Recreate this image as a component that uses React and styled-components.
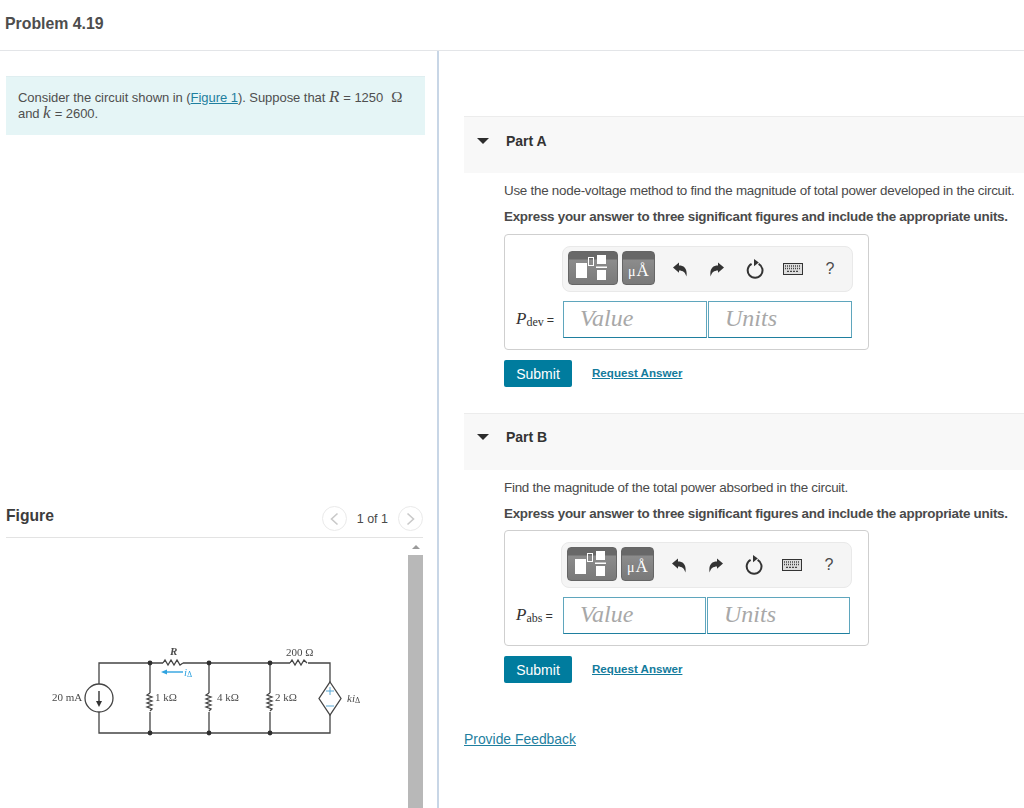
import React from 'react'
import styled, { createGlobalStyle } from 'styled-components'

const GlobalStyle = createGlobalStyle`
  html, body {
    margin: 0;
    padding: 0;
    background: #ffffff;
    font-family: "Liberation Sans", Arial, sans-serif;
    color: #4a4a4a;
  }
`

const Page = styled.div`
  width: 1024px;
  height: 808px;
  overflow: hidden;
  display: flex;
  flex-direction: column;
`

const Header = styled.header`
  height: 51px;
  flex-shrink: 0;
  box-sizing: border-box;
  padding: 15px 0 0 5px;
  border-bottom: 1px solid #e3e5e8;
`

const Title = styled.h1`
  margin: 0;
  font-size: 15.85px;
  line-height: 18px;
  font-weight: 700;
  color: #4d4d4d;
`

const Columns = styled.div`
  flex: 1;
  display: flex;
  min-height: 0;
`

const LeftColumn = styled.section`
  width: 439px;
  flex-shrink: 0;
  box-sizing: border-box;
  padding: 25px 12px 0 6px;
  border-right: 2px solid #c8d6e6;
  display: flex;
  flex-direction: column;
`

const RightColumn = styled.main`
  flex: 1;
  min-width: 0;
  padding: 65px 0 0 25px;
`

const Prompt = styled.div`
  height: 59px;
  box-sizing: border-box;
  padding: 13px 12px 0 12px;
  background: #e5f5f6;
  border-top: 1px solid #dfeef0;
  font-size: 13px;
  line-height: 16px;
  letter-spacing: -0.05px;
  color: #4f4f4f;
`

const MathVar = styled.i`
  font-family: "Liberation Serif", serif;
  font-size: 17px;
  line-height: 0;
  letter-spacing: 0.5px;
`

const OhmSign = styled.span`
  font-family: "Liberation Serif", serif;
  font-size: 15px;
  line-height: 0;
  margin-left: 8px;
`

const InlineLink = styled.a`
  color: #1f7f9f;
  text-decoration: underline;
`

const FigureBar = styled.div`
  margin: 371px 2px 0 0;
  height: 32px;
  box-sizing: border-box;
  border-bottom: 1px solid #e3e3e3;
  display: flex;
  align-items: flex-start;
`

const FigureTitle = styled.h2`
  margin: 1px 0 0;
  flex: 1;
  font-size: 15.7px;
  line-height: 18px;
  font-weight: 700;
  color: #3c3c3c;
`

const Pager = styled.div`
  display: flex;
  align-items: center;
  gap: 10px;
  font-size: 12.5px;
  color: #4a4a4a;
`

const PagerButton = styled.span`
  width: 25px;
  height: 25px;
  box-sizing: border-box;
  border: 1px solid #eaeaea;
  border-radius: 50%;
  display: flex;
  align-items: center;
  justify-content: center;
`

const FigureViewport = styled.div`
  flex: 1;
  min-height: 0;
  margin-right: 2px;
  display: flex;
  overflow: hidden;
`

const CircuitArea = styled.div`
  flex: 1;
  min-width: 0;
`

const CircuitSvg = styled.svg`
  display: block;
  filter: blur(0.35px);
`

const ScrollTrack = styled.div`
  width: 15px;
  flex-shrink: 0;
  display: flex;
  flex-direction: column;
  align-items: center;
`

const ScrollUp = styled.span`
  height: 17px;
  width: 100%;
  display: flex;
  align-items: center;
  justify-content: center;
  &::before {
    content: '';
    border-left: 4px solid transparent;
    border-right: 4px solid transparent;
    border-bottom: 4px solid #9a9a9a;
  }
`

const ScrollThumb = styled.div`
  flex: 1;
  width: 15px;
  background: #b8b8b8;
`

const PartHeader = styled.div`
  height: 57px;
  box-sizing: border-box;
  background: #f8f8f8;
  border-top: 1px solid #ececec;
  display: flex;
  align-items: flex-start;
  padding: ${(p) => p.$top}px 0 0 13px;
`

const Caret = styled.span`
  width: 0;
  height: 0;
  margin-top: 5px;
  border-left: 6px solid transparent;
  border-right: 6px solid transparent;
  border-top: 6px solid #2d2d2d;
`

const PartTitle = styled.h3`
  margin: 0 0 0 17px;
  font-size: 14px;
  line-height: 16px;
  font-weight: 700;
  color: #333333;
`

const PartBody = styled.div`
  padding: 10px 0 26px 40px;
`

const Instruction = styled.p`
  margin: 0 0 ${(p) => p.$gap}px;
  font-size: 13.4px;
  line-height: 16px;
  font-weight: ${(p) => (p.$strong ? 700 : 400)};
  letter-spacing: ${(p) => (p.$strong ? '-0.26px' : '-0.25px')};
  color: #4a4a4a;
  white-space: nowrap;
`

const AnswerBox = styled.div`
  width: 365px;
  height: 116px;
  box-sizing: border-box;
  border: 1px solid #cfcfcf;
  border-radius: 4px;
  padding: 11px 0 0 57px;
`

const Toolbar = styled.div`
  width: 291px;
  height: 46px;
  box-sizing: border-box;
  margin-left: ${(p) => p.$shift}px;
  background: #f5f5f5;
  border: 1px solid #e9e9e9;
  border-radius: 8px;
  display: flex;
  align-items: center;
  padding: 0 0 2px 5px;
`

const TemplateButton = styled.span`
  width: ${(p) => p.$width}px;
  height: 34px;
  margin-right: 4px;
  box-sizing: border-box;
  border-radius: 4px;
  border: 1px solid #666666;
  background: linear-gradient(#686868 0, #686868 7px, #8c8c8c 8px, #797979 100%);
  display: flex;
  align-items: flex-end;
  justify-content: center;
`

const MuLabel = styled.span`
  font-family: "Liberation Serif", serif;
  font-size: 17px;
  line-height: 25px;
  color: #ffffff;
`

const MuSmall = styled.span`
  font-size: 14px;
  margin-right: 1px;
`

const ToolIcon = styled.span`
  width: ${(p) => p.$width}px;
  padding-top: 2px;
  display: flex;
  justify-content: center;
  color: #333333;
`

const HelpMark = styled.span`
  font-size: 16px;
  line-height: 18px;
  color: #4a4a4a;
`

const InputRow = styled.div`
  display: flex;
  align-items: center;
  margin-top: 9px;
  margin-left: -46px;
`

const VarLabel = styled.span`
  width: 47px;
  flex-shrink: 0;
  font-size: 12.5px;
  color: #333333;
  white-space: nowrap;
`

const VarName = styled.i`
  font-family: "Liberation Serif", serif;
  font-size: 17px;
`

const VarSub = styled.span`
  font-family: "Liberation Serif", serif;
  font-size: 12px;
  margin-right: 3px;
  vertical-align: -2px;
`

const AnswerInput = styled.input`
  width: ${(p) => p.$width}px;
  height: 37px;
  box-sizing: border-box;
  margin-right: 1px;
  padding: 0 0 2px 16px;
  border: 1px solid #5fa6bd;
  border-bottom-color: #1f7f9f;
  border-radius: 0;
  outline: none;
  background: #ffffff;
  font-family: "Liberation Serif", serif;
  font-style: italic;
  font-size: 24px;
  &::placeholder {
    color: #a8a8a8;
    opacity: 1;
  }
`

const ActionRow = styled.div`
  margin-top: 10px;
  display: flex;
  align-items: center;
  gap: 20px;
`

const SubmitButton = styled.button`
  width: 68px;
  height: 27px;
  border: none;
  border-radius: 2px;
  background: #007c9e;
  color: #ffffff;
  font-family: "Liberation Sans", Arial, sans-serif;
  font-size: 14px;
  padding: 0;
`

const RequestLink = styled.a`
  margin-bottom: 2px;
  font-size: 11.6px;
  font-weight: 700;
  color: #137b9c;
  text-decoration: underline;
`

const FeedbackLink = styled.a`
  display: block;
  margin-top: 22px;
  font-size: 13.9px;
  line-height: 16px;
  color: #1f7f9f;
  text-decoration: underline;
`

const ChevronIcon = ({ flip }) => (
  <svg width="9" height="14" viewBox="0 0 9 14">
    <path
      d={flip ? 'M1.5 1.5 L7.5 7 L1.5 12.5' : 'M7.5 1.5 L1.5 7 L7.5 12.5'}
      fill="none"
      stroke="#c9c9c9"
      strokeWidth="1.6"
    />
  </svg>
)

const TemplatesIcon = () => (
  <svg width="48" height="32" viewBox="0 0 48 32">
    <rect x="7" y="11" width="11" height="15" fill="#ffffff" />
    <rect x="19.5" y="5.5" width="5" height="8" fill="none" stroke="#ffffff" strokeWidth="1" />
    <rect x="28" y="3" width="9" height="9" fill="#ffffff" />
    <rect x="27" y="14.5" width="11" height="1.5" fill="#ffffff" />
    <rect x="28" y="18" width="9" height="10" fill="#ffffff" />
  </svg>
)

const ReplyIcon = ({ flip }) => (
  <svg width="14" height="15" viewBox="0 0 14 15" style={flip ? { transform: 'scaleX(-1)' } : undefined}>
    <path d="M0 5.5 L6 0.5 V3.4 C11.5 3.4 14.6 7 13.4 14.5 C12.4 10.4 10 8.4 6 8.4 V10.8 Z" fill="#333333" />
  </svg>
)

const ResetIcon = () => (
  <svg width="18" height="20" viewBox="0 0 18 20">
    <path d="M5.6 4.8 A7.4 7.4 0 1 0 12.6 4.8" fill="none" stroke="#333333" strokeWidth="2" />
    <path d="M8 0 L12.8 3.6 L8 7.2 Z" fill="#333333" />
  </svg>
)

const KeyboardIcon = () => (
  <svg width="20" height="12" viewBox="0 0 20 12">
    <rect x="0.5" y="0.5" width="19" height="11" fill="#dddddd" stroke="#333333" />
    <path
      d="M2 3 H18 M2 5.5 H18"
      stroke="#444444"
      strokeWidth="1.3"
      strokeDasharray="1 1"
    />
    <path d="M4 8.4 H16" stroke="#444444" strokeWidth="1.3" strokeDasharray="2 1" />
  </svg>
)

const wire = { fill: 'none', stroke: '#444444', strokeWidth: 1.3 }
const label = { fontFamily: '"Liberation Serif", serif', fontSize: 11, fill: '#4a4a4a' }
const nodes = [
  [150, 663], [209, 663], [270, 663],
  [150, 733], [209, 733], [270, 733],
]
const coil = 'l-3 2 l5 2 l-5 2 l5 2 l-5 2 l5 2 l-5 2 l5 2 l-2 2'

const Circuit = () => (
  <CircuitSvg width="400" height="270" viewBox="6 538 400 270">
    <path
      {...wire}
      d="M99 684 V663 H163 M183 663 H290 M308 663 H330 V682 M330 715 V733 H99 V712 M150 663 V693 M150 712 V733 M209 663 V693 M209 712 V733 M270 663 V693 M270 712 V733"
    />
    <path {...wire} d="M163 663 l2 -3 l3 5 l3 -5 l3 5 l3 -5 l3 5 l3 -2" />
    <path {...wire} d="M290 663 l2 -3 l3 5 l3 -5 l3 5 l3 -5 l3 3" />
    <path {...wire} d={`M150 693 ${coil}`} />
    <path {...wire} d={`M209 693 ${coil}`} />
    <path {...wire} d={`M270 693 ${coil}`} />
    {nodes.map(([cx, cy]) => (
      <circle key={`${cx}-${cy}`} cx={cx} cy={cy} r="2.4" fill="#2f2f2f" />
    ))}
    <circle cx="99" cy="698" r="14" fill="#ffffff" stroke="#444444" strokeWidth="1.3" />
    <path d="M99 691 V704" stroke="#333333" strokeWidth="1.4" />
    <path d="M96 701 L99 707 L102 701 Z" fill="#333333" />
    <path d="M330 682 L341 698.5 L330 715 L319 698.5 Z" fill="#ffffff" stroke="#444444" strokeWidth="1.3" />
    <path d="M326 691 H334 M330 687 V695" stroke="#5aa9d6" strokeWidth="1" />
    <path d="M326 706 H334" stroke="#5aa9d6" strokeWidth="1" />
    <path d="M165 672 H183" stroke="#2fa3e0" strokeWidth="1.4" />
    <path d="M161 672 L167 669.5 V674.5 Z" fill="#2fa3e0" />
    <text x="184" y="676" fontFamily='"Liberation Serif", serif' fontSize="11" fontStyle="italic" fill="#2fa3e0">
      i<tspan fontStyle="normal" fontSize="8" dy="1">Δ</tspan>
    </text>
    <text {...label} x="170" y="655" fontStyle="italic" fontWeight="700">R</text>
    <text {...label} x="286" y="656">200 Ω</text>
    <text {...label} x="52" y="701">20 mA</text>
    <text {...label} x="155" y="701">1 kΩ</text>
    <text {...label} x="217" y="701">4 kΩ</text>
    <text {...label} x="275" y="701">2 kΩ</text>
    <text {...label} x="347" y="702" fontStyle="italic">
      ki<tspan fontStyle="normal" fontSize="8" dy="1">Δ</tspan>
    </text>
  </CircuitSvg>
)

const Part = ({ name, top, question, symbol, sub, gap, shift, fieldWidth }) => (
  <section>
    <PartHeader $top={top}>
      <Caret />
      <PartTitle>{name}</PartTitle>
    </PartHeader>
    <PartBody>
      <Instruction $gap={10}>{question}</Instruction>
      <Instruction $strong $gap={gap}>
        Express your answer to three significant figures and include the appropriate units.
      </Instruction>
      <AnswerBox>
        <Toolbar $shift={shift}>
          <TemplateButton $width={50}>
            <TemplatesIcon />
          </TemplateButton>
          <TemplateButton $width={33}>
            <MuLabel><MuSmall>μ</MuSmall>Å</MuLabel>
          </TemplateButton>
          <ToolIcon $width={41}>
            <ReplyIcon />
          </ToolIcon>
          <ToolIcon $width={33}>
            <ReplyIcon flip />
          </ToolIcon>
          <ToolIcon $width={44}>
            <ResetIcon />
          </ToolIcon>
          <ToolIcon $width={31}>
            <KeyboardIcon />
          </ToolIcon>
          <ToolIcon $width={44}>
            <HelpMark>?</HelpMark>
          </ToolIcon>
        </Toolbar>
        <InputRow>
          <VarLabel>
            <VarName>P</VarName>
            <VarSub>{sub}</VarSub>=
          </VarLabel>
          <AnswerInput $width={fieldWidth} placeholder="Value" aria-label={`${symbol} value`} />
          <AnswerInput $width={fieldWidth} placeholder="Units" aria-label={`${symbol} units`} />
        </InputRow>
      </AnswerBox>
      <ActionRow>
        <SubmitButton type="button">Submit</SubmitButton>
        <RequestLink href="#">Request Answer</RequestLink>
      </ActionRow>
    </PartBody>
  </section>
)

const App = () => (
  <Page>
    <GlobalStyle />
    <Header>
      <Title>Problem 4.19</Title>
    </Header>
    <Columns>
      <LeftColumn>
        <Prompt>
          Consider the circuit shown in (<InlineLink href="#">Figure 1</InlineLink>). Suppose that{' '}
          <MathVar>R</MathVar> = 1250<OhmSign>Ω</OhmSign>
          <br />
          and <MathVar>k</MathVar> = 2600.
        </Prompt>
        <FigureBar>
          <FigureTitle>Figure</FigureTitle>
          <Pager>
            <PagerButton>
              <ChevronIcon />
            </PagerButton>
            <span>1 of 1</span>
            <PagerButton>
              <ChevronIcon flip />
            </PagerButton>
          </Pager>
        </FigureBar>
        <FigureViewport>
          <CircuitArea>
            <Circuit />
          </CircuitArea>
          <ScrollTrack>
            <ScrollUp />
            <ScrollThumb />
          </ScrollTrack>
        </FigureViewport>
      </LeftColumn>
      <RightColumn>
        <Part
          name="Part A"
          top={16}
          question="Use the node-voltage method to find the magnitude of total power developed in the circuit."
          symbol="Pdev"
          sub="dev"
          gap={9}
          shift={0}
          fieldWidth={144}
        />
        <Part
          name="Part B"
          top={15}
          question="Find the magnitude of the total power absorbed in the circuit."
          symbol="Pabs"
          sub="abs"
          gap={8}
          shift={-1}
          fieldWidth={143}
        />
        <FeedbackLink href="#">Provide Feedback</FeedbackLink>
      </RightColumn>
    </Columns>
  </Page>
)

export default App
